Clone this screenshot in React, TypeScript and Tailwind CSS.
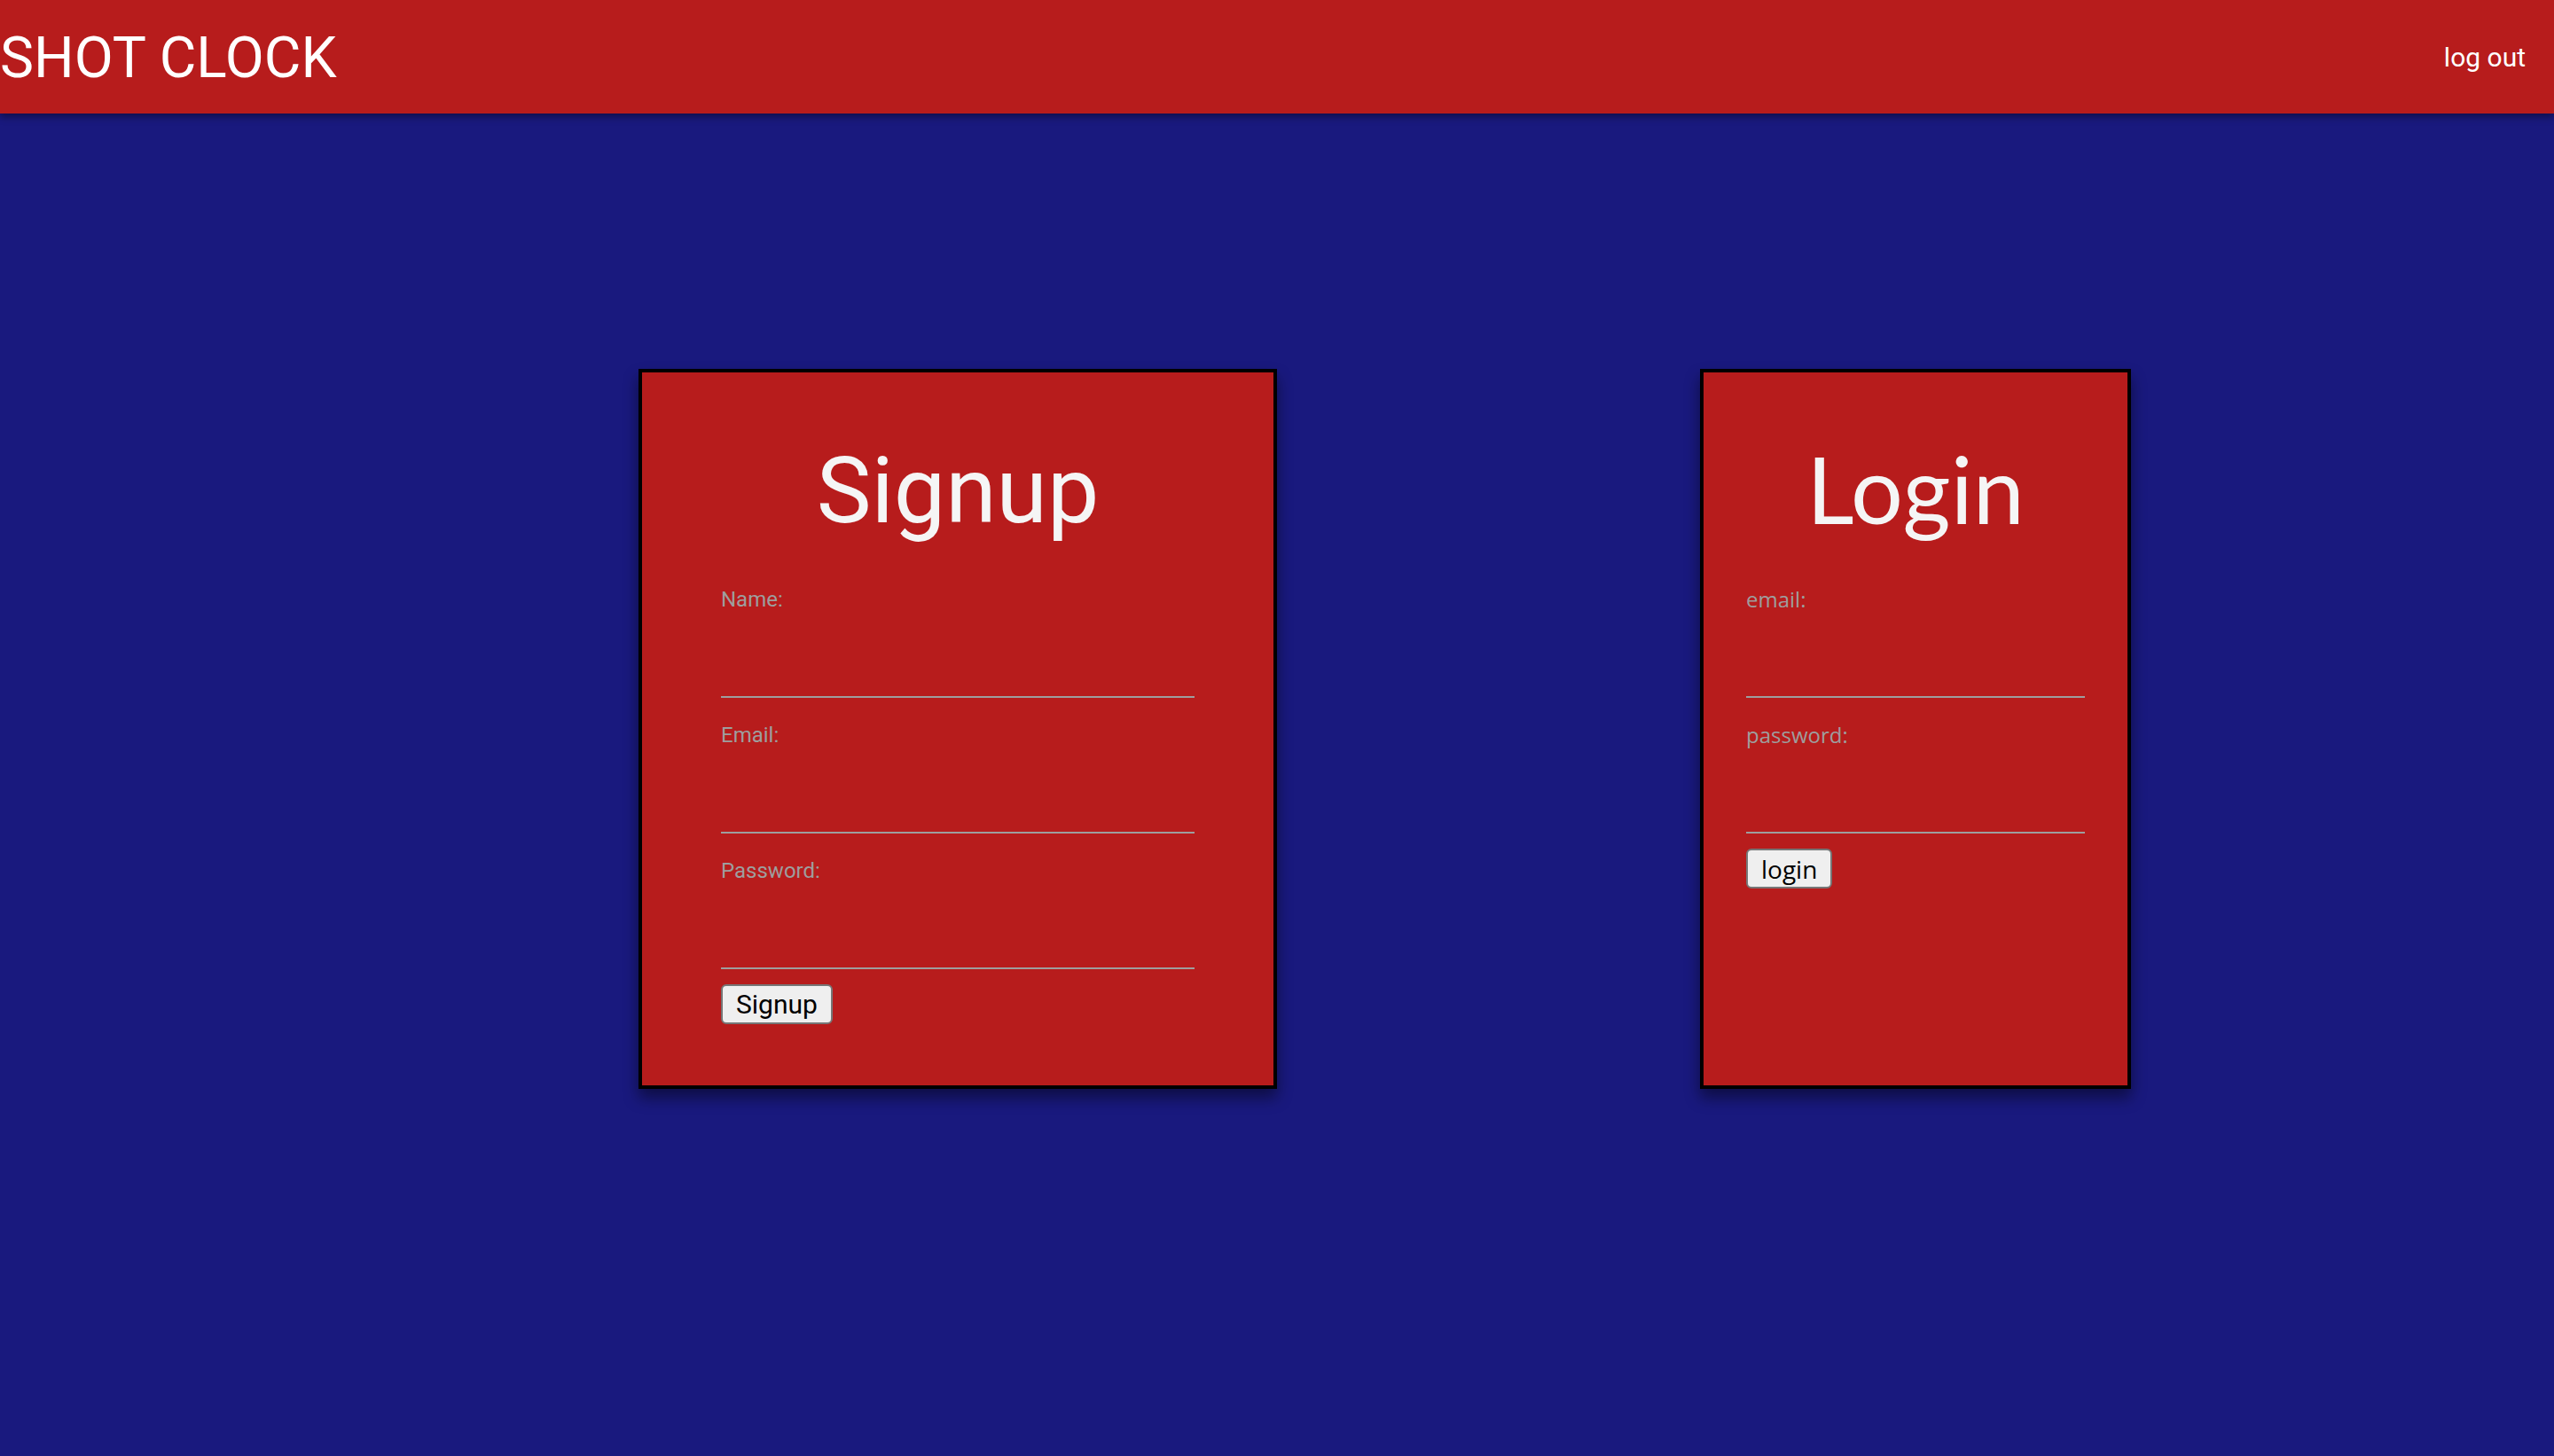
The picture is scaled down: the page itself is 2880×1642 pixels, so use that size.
import React from 'react';

const roboto = { fontFamily: 'Roboto, "Liberation Sans", sans-serif' };

function Field({ label, type, font, width }: { label: string; type: string; font: string; width: string }) {
  return (
    <div className={width}>
      <label className={`block text-[24px] leading-[28px] text-[#9e9e9e] ${font}`}>{label}</label>
      <input
        type={type}
        className="block w-full h-[97px] bg-transparent border-0 border-b-2 border-[#9e9e9e] outline-none text-white text-[24px]"
      />
    </div>
  );
}

function Signup() {
  return (
    <div className="w-[720px] h-[812px] bg-[#b71c1c] border-4 border-black shadow-[0_10px_16px_rgba(0,0,0,0.45)]">
      <h1 className="mt-[72px] text-center text-[104px] leading-[124px] text-[#f5f5f5] font-['Roboto',sans-serif]">
        Signup
      </h1>
      <form className="ml-[89px] mt-[46px] flex flex-col gap-[28px]">
        <Field label="Name:" type="text" font="font-['Roboto',sans-serif]" width="w-[534px]" />
        <Field label="Email:" type="email" font="font-['Roboto',sans-serif]" width="w-[534px]" />
        <Field label="Password:" type="password" font="font-['Roboto',sans-serif]" width="w-[534px]" />
      </form>
      <div className="ml-[89px] mt-[17px]">
        <button className="h-[45px] px-[15px] bg-[#efefef] border-2 border-[#767676] rounded-[6px] text-black text-[30px] leading-[38px] font-['Roboto',sans-serif]">
          Signup
        </button>
      </div>
    </div>
  );
}

function Login() {
  return (
    <div className="w-[486px] h-[812px] bg-[#b71c1c] border-4 border-black shadow-[0_10px_16px_rgba(0,0,0,0.45)]">
      <h1 className="mt-[69px] text-center text-[104px] leading-[124px] text-[#f5f5f5] font-['Lato',sans-serif]">
        Login
      </h1>
      <form className="ml-[48px] mt-[49px] flex flex-col gap-[28px]">
        <Field label="email:" type="email" font="font-['Open_Sans',sans-serif]" width="w-[382px]" />
        <Field label="password:" type="password" font="font-['Open_Sans',sans-serif]" width="w-[382px]" />
      </form>
      <div className="ml-[48px] mt-[17px]">
        <button className="h-[45px] px-[15px] bg-[#efefef] border-2 border-[#767676] rounded-[6px] text-black text-[28px] leading-[38px] font-['Open_Sans',sans-serif]">
          login
        </button>
      </div>
    </div>
  );
}

export default function App() {
  return (
    <div className="min-h-screen bg-[#19197e]" style={roboto}>
      <header className="relative z-10 h-[128px] bg-[#b71c1c] flex items-center justify-between pr-[32px] shadow-[0_4px_8px_rgba(0,0,0,0.4)]">
        <span className="text-white text-[64px] pt-[4px] font-['Roboto',sans-serif]">SHOT CLOCK</span>
        <a className="text-white text-[30px] font-['Roboto',sans-serif] cursor-pointer">log out</a>
      </header>

      <main className="grid grid-cols-2 pt-[288px]">
        <div className="flex justify-end">
          <Signup />
        </div>
        <div className="flex justify-center">
          <Login />
        </div>
      </main>
    </div>
  );
}
